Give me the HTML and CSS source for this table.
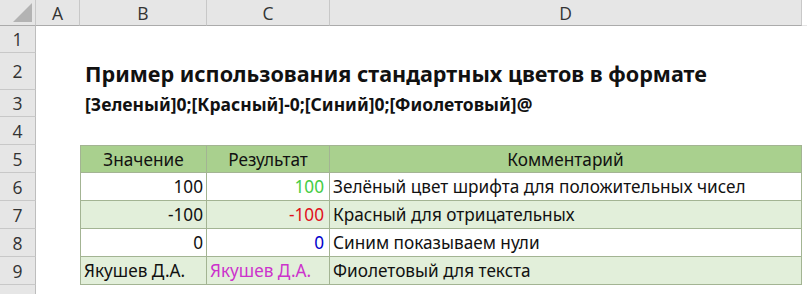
FILE: index.html
```html
<!DOCTYPE html>
<html lang="ru">
<head>
<meta charset="utf-8">
<link rel="stylesheet" href="styles.css">
</head>
<body>
<div class="sheet">
  <div class="corner"><span class="tri"></span></div>
  <div class="colh">A</div>
  <div class="colh">B</div>
  <div class="colh">C</div>
  <div class="colh">D</div>
  <div class="colh rest"></div>

  <div class="rowh">1</div>
  <div class="blank span5"></div>

  <div class="rowh">2</div>
  <div class="blank"></div>
  <div class="title span3">Пример использования стандартных цветов в формате</div>
  <div class="blank"></div>

  <div class="rowh">3</div>
  <div class="blank"></div>
  <div class="subtitle span3">[Зеленый]0;[Красный]-0;[Синий]0;[Фиолетовый]@</div>
  <div class="blank"></div>

  <div class="rowh">4</div>
  <div class="blank span5"></div>

  <div class="rowh">5</div>
  <div class="blank"></div>
  <div class="cell head first top">Значение</div>
  <div class="cell head top">Результат</div>
  <div class="cell head top">Комментарий</div>
  <div class="blank"></div>

  <div class="rowh">6</div>
  <div class="blank"></div>
  <div class="cell num first">100</div>
  <div class="cell num pad green">100</div>
  <div class="cell">Зелёный цвет шрифта для положительных чисел</div>
  <div class="blank"></div>

  <div class="rowh">7</div>
  <div class="blank"></div>
  <div class="cell num first alt">-100</div>
  <div class="cell num pad red alt">-100</div>
  <div class="cell alt">Красный для отрицательных</div>
  <div class="blank"></div>

  <div class="rowh">8</div>
  <div class="blank"></div>
  <div class="cell num first">0</div>
  <div class="cell num pad blue">0</div>
  <div class="cell">Синим показываем нули</div>
  <div class="blank"></div>

  <div class="rowh">9</div>
  <div class="blank"></div>
  <div class="cell first alt">Якушев Д.А.</div>
  <div class="cell alt magenta">Якушев Д.А.</div>
  <div class="cell alt">Фиолетовый для текста</div>
  <div class="blank"></div>

  <div class="rowh"></div>
  <div class="blank span5"></div>
</div>
</body>
</html>
```
FILE: styles.css
```css
* { box-sizing: border-box; }
html, body { margin: 0; padding: 0; background: #ffffff; }
body { width: 807px; height: 294px; overflow: hidden; }

.sheet {
  display: grid;
  grid-template-columns: 36px 44px 127px 123px 472px 5px;
  grid-template-rows: 26px 27px 37px 27px 28px 28px 28px 28px 28px 28px 20px;
  font-family: "Noto Sans", "Open Sans", sans-serif;
  color: #111;
}

.corner {
  position: relative;
  background: #e6e6e6;
  border-right: 1px solid #c8c8c8;
  border-bottom: 1px solid #ababab;
}
.tri {
  position: absolute;
  right: 3px;
  bottom: 3px;
  width: 0;
  height: 0;
  border-left: 19px solid transparent;
  border-bottom: 19px solid #b3b3b3;
}

.colh {
  background: #e6e6e6;
  border-right: 1px solid #c8c8c8;
  border-bottom: 1px solid #ababab;
  display: flex;
  align-items: center;
  justify-content: center;
  font-family: "Open Sans", "Noto Sans", sans-serif;
  font-size: 17.5px;
  color: #333;
  padding-top: 1px;
}
.colh.rest { background: #fff; border-right: none; border-bottom: 1px solid #e6e6e6; }

.rowh {
  background: #e6e6e6;
  border-right: 1px solid #bdbdbd;
  border-bottom: 1px solid #c8c8c8;
  display: flex;
  align-items: center;
  justify-content: center;
  font-family: "Open Sans", "Noto Sans", sans-serif;
  font-size: 17.5px;
  color: #333;
}

.blank { background: #fff; }
.span5 { grid-column: span 5; }
.span3 { grid-column: span 3; }

.title {
  font-weight: 700;
  font-size: 21.6px;
  display: flex;
  align-items: flex-end;
  padding: 0 0 2px 5px;
  white-space: nowrap;
}
.subtitle {
  font-weight: 700;
  font-size: 17.5px;
  display: flex;
  align-items: center;
  padding: 0 0 0 5px;
  white-space: nowrap;
}

.cell {
  background: #fff;
  border-right: 1px solid #a3b493;
  border-bottom: 1px solid #a3b493;
  display: flex;
  align-items: center;
  padding: 0 3px 0 3px;
  font-size: 17.2px;
  white-space: nowrap;
}
.cell.pad { padding-right: 5px; }
.cell.first { border-left: 1px solid #a3b493; }
.cell.top { border-top: 1px solid #a3b493; }
.cell.head { background: #a9d08e; justify-content: center; }
.cell.alt { background: #e2efda; }
.cell.num { justify-content: flex-end; }
.green { color: #45cc45; }
.red { color: #e0101c; }
.blue { color: #0000cc; }
.magenta { color: #cc33cc; }
```
